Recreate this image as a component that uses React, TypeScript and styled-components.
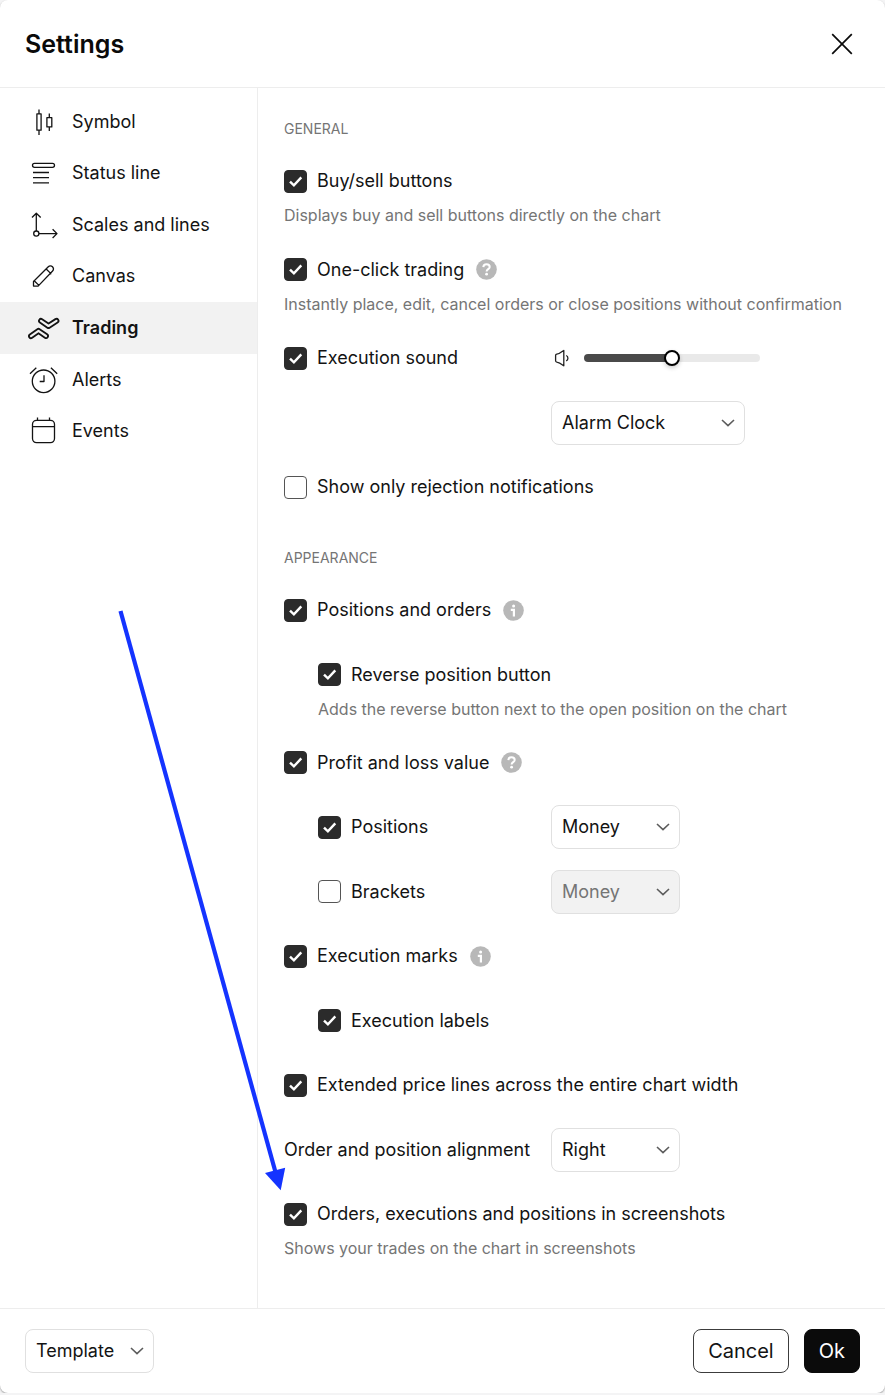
import React, { useId, useState } from "react";
import styled, { createGlobalStyle, css } from "styled-components";

const GlobalStyle = createGlobalStyle`
  *, *::before, *::after { box-sizing: border-box; }
  body {
    margin: 0;
    background: #f4f4f5;
    color: #131313;
    font-family: Inter, "Liberation Sans", sans-serif;
    font-size: 18px;
    line-height: 24px;
  }
  button, select, input { font: inherit; color: inherit; }
`;

const Dialog = styled.div`
  position: relative;
  display: flex;
  flex-direction: column;
  min-height: calc(100vh - 2px);
  background: #fff;
  border-radius: 8px;
  box-shadow: 0 1px 2px rgba(0, 0, 0, 0.35);
`;

const Header = styled.header`
  display: flex;
  align-items: center;
  justify-content: space-between;
  height: 88px;
  padding: 0 25px;
  border-bottom: 1px solid #ededed;
`;

const Title = styled.h1`
  margin: 0;
  font-size: 25px;
  line-height: 32px;
  font-weight: 600;
  color: #0a0a0a;
`;

const CloseButton = styled.button`
  display: grid;
  place-items: center;
  width: 36px;
  height: 36px;
  padding: 0;
  border: 0;
  background: none;
  cursor: pointer;
`;

const Body = styled.div`
  display: flex;
  flex: 1;
`;

const Sidebar = styled.nav`
  flex: none;
  width: 258px;
  padding-top: 8px;
  border-right: 1px solid #ededed;
`;

const NavList = styled.ul`
  display: grid;
  grid-auto-rows: 1fr;
  height: 361px;
  margin: 0;
  padding: 0;
  list-style: none;
`;

const NavItem = styled.li`
  display: flex;
`;

const NavLink = styled.a<{ $active?: boolean }>`
  display: flex;
  flex: 1;
  align-items: center;
  gap: 12px;
  padding: 0 28px;
  color: inherit;
  text-decoration: none;
  font-weight: ${(p) => (p.$active ? 600 : 400)};
  background: ${(p) => (p.$active ? "#f2f2f2" : "transparent")};
`;

const Panel = styled.main`
  display: flex;
  flex: 1;
  flex-direction: column;
  justify-content: space-between;
  gap: 20px;
  min-width: 0;
  padding: 31px 25px 48px 26px;
`;

const SectionTitle = styled.h2<{ $spaced?: boolean }>`
  margin: ${(p) => (p.$spaced ? "18px" : "0")} 0 0;
  font-size: 14px;
  line-height: 20px;
  font-weight: 400;
  text-transform: uppercase;
  color: #757575;
`;

const Setting = styled.div<{ $nested?: boolean }>`
  padding-left: ${(p) => (p.$nested ? "34px" : "0")};
`;

const Row = styled.div`
  display: flex;
  align-items: center;
  height: 44px;
`;

const Lead = styled.div<{ $nested?: boolean; $fixed?: boolean }>`
  display: flex;
  align-items: center;
  gap: 12px;
  white-space: nowrap;
  ${(p) =>
    p.$fixed &&
    css`
      flex: none;
      width: ${p.$nested ? "233px" : "267px"};
    `}
`;

const CheckLabel = styled.label`
  display: flex;
  align-items: center;
  gap: 10px;
  cursor: pointer;
`;

const CheckBox = styled.span`
  display: grid;
  flex: none;
  width: 23px;
  height: 23px;

  > * {
    grid-area: 1 / 1;
  }

  svg {
    pointer-events: none;
  }
`;

const CheckInput = styled.input`
  appearance: none;
  width: 23px;
  height: 23px;
  margin: 0;
  border: 1px solid #555;
  border-radius: 4px;
  background: #fff;

  &:checked {
    border-color: #2b2b2b;
    background: #2b2b2b;
  }
`;

const Hint = styled.p`
  margin: 0;
  font-size: 16px;
  color: #757575;
  white-space: nowrap;
`;

const SelectBox = styled.span<{ $wide?: boolean }>`
  display: inline-grid;
  align-items: center;
  flex: none;
  width: ${(p) => (p.$wide ? "194px" : "129px")};

  > * {
    grid-area: 1 / 1;
  }

  svg {
    justify-self: end;
    margin-right: 10px;
    pointer-events: none;
  }
`;

const SelectInput = styled.select`
  appearance: none;
  width: 100%;
  height: 44px;
  padding: 0 28px 0 10px;
  border: 1px solid #e0e0e0;
  border-radius: 8px;
  background: #fff;

  &:disabled {
    background: #f2f2f2;
    color: #757575;
    opacity: 1;
  }
`;

const Volume = styled.div`
  display: flex;
  align-items: center;
  gap: 12px;
  padding-left: 2px;
`;

const VolumeRange = styled.input`
  appearance: none;
  width: 176px;
  height: 16px;
  margin: 0;
  background: transparent;

  &::-webkit-slider-runnable-track {
    height: 8px;
    border-radius: 4px;
    background: linear-gradient(
      to right,
      #4a4a4a var(--level),
      #e9e9e9 var(--level)
    );
  }

  &::-webkit-slider-thumb {
    appearance: none;
    width: 16px;
    height: 16px;
    margin-top: -4px;
    border: 2px solid #000;
    border-radius: 50%;
    background: #fff;
    box-shadow: 0 2px 4px rgba(0, 0, 0, 0.2);
  }
`;

const Footer = styled.footer`
  display: flex;
  align-items: center;
  justify-content: space-between;
  padding: 20px 25px;
  border-top: 1px solid #ededed;
`;

const Actions = styled.div`
  display: flex;
  gap: 15px;
`;

const ActionButton = styled.button<{ $primary?: boolean }>`
  height: 44px;
  padding: 0 14px;
  border: 1px solid ${(p) => (p.$primary ? "#0b0b0b" : "#3c3c3c")};
  border-radius: 8px;
  background: ${(p) => (p.$primary ? "#0b0b0b" : "#fff")};
  color: ${(p) => (p.$primary ? "#fff" : "#131313")};
  font-size: 20px;
  cursor: pointer;
`;

const Pointer = styled.svg`
  position: absolute;
  top: 600px;
  left: 100px;
  pointer-events: none;
`;

const NavIcon = ({ children }: { children: React.ReactNode }) => (
  <svg
    width="32"
    height="32"
    viewBox="0 0 32 32"
    fill="none"
    stroke="currentColor"
    strokeWidth="1.3"
    strokeLinejoin="round"
    aria-hidden="true"
  >
    {children}
  </svg>
);

const Chevron = () => (
  <svg width="14" height="8" viewBox="0 0 14 8" fill="none" stroke="#5c5c5c" strokeWidth="1.6" aria-hidden="true">
    <path d="M1 1l6 5.6L13 1" />
  </svg>
);

const HelpIcon = () => (
  <svg width="21" height="21" viewBox="0 0 21 21" fill="none" role="img" aria-label="Help">
    <circle cx="10.5" cy="10.5" r="10.3" fill="#b8b8b8" />
    <path
      d="M7.3 8.1c.1-1.9 1.4-2.9 3.2-2.9s3.2 1 3.2 2.7c0 2.2-3.1 2.3-3.1 4.6"
      stroke="#fff"
      strokeWidth="2"
    />
    <circle cx="10.6" cy="15.2" r="1.4" fill="#fff" />
  </svg>
);

const InfoIcon = () => (
  <svg width="21" height="21" viewBox="0 0 21 21" fill="none" role="img" aria-label="Information">
    <circle cx="10.5" cy="10.5" r="10.3" fill="#b8b8b8" />
    <circle cx="10.6" cy="5.9" r="1.5" fill="#fff" />
    <path d="M7.8 9.9h3.1v6.6" stroke="#fff" strokeWidth="2.2" />
  </svg>
);

const SpeakerIcon = () => (
  <svg width="19" height="18" viewBox="0 0 19 18" fill="none" stroke="#222" strokeWidth="1.3" strokeLinejoin="round" aria-hidden="true">
    <path d="M2.600 6.400c0-.8.5-1.200 1.200-1.300 2.700-.3 4.500-1.800 7-3.700v15.400c-2.500-1.900-4.300-3.400-7-3.700-.7-.1-1.200-.5-1.200-1.300z" />
    <path d="M13.200 6.500c2.300 1 2.300 4.300 0 5.300" />
  </svg>
);

const navItems = [
  {
    name: "Symbol",
    icon: (
      <NavIcon>
        <path d="M8.900 7.800h4.200v16.400H8.900zM11 3.500v4.300M11 24.200v4.800M18.900 11.700h4.900v9.200h-4.900zM21.300 7.500v4.200M21.300 20.900v4.100" />
      </NavIcon>
    ),
  },
  {
    name: "Status line",
    icon: (
      <NavIcon>
        <rect x="4.500" y="6.300" width="22" height="4" rx="2" />
        <path d="M5 15.500h16M5 20.700h16M5 25.800h16" />
      </NavIcon>
    ),
  },
  {
    name: "Scales and lines",
    icon: (
      <NavIcon>
        <circle cx="8.300" cy="24.600" r="2.600" />
        <path d="M8.300 22V4.300M4 8.500l4.300-4.300 4.400 4.300M10.900 24.600h17.800M24.600 20.200l4.400 4.400-4.400 4.400" />
      </NavIcon>
    ),
  },
  {
    name: "Canvas",
    icon: (
      <NavIcon>
        <path d="M5.500 26.100v-4.600L20.300 6.700c1.300-1.300 3-1.100 4.200.1s1.400 2.900.1 4.200L10.100 26.100zM17.700 8.500l5.700 5.600M6.200 20.700l5 4.900" />
      </NavIcon>
    ),
  },
  {
    name: "Trading",
    active: true,
    icon: (
      <NavIcon>
        <g strokeLinecap="round">
          <path d="M13 8.800l7.500 5.200 8-5.200M3 24.200l7.500-5.400 7.500 5.200" strokeWidth="5.800" />
          <path d="M13 8.800l7.500 5.200 8-5.200M3 24.200l7.500-5.400 7.500 5.200" stroke="#f2f2f2" strokeWidth="2.200" />
        </g>
      </NavIcon>
    ),
  },
  {
    name: "Alerts",
    icon: (
      <NavIcon>
        <circle cx="15.600" cy="17.300" r="11.300" />
        <path d="M16 11.300v6.200h-4.300M2 9.800l6.300-6M22.900 3.800l6.300 6" />
      </NavIcon>
    ),
  },
  {
    name: "Events",
    icon: (
      <NavIcon>
        <rect x="4.500" y="5.300" width="22" height="22.300" rx="4" />
        <path d="M4.500 11.700h22M9.500 2.500v2.800M21.500 2.500v2.800" />
      </NavIcon>
    ),
  },
];

type SelectProps = { label: string; options: string[]; wide?: boolean; disabled?: boolean };

const Select = ({ label, options, wide, disabled }: SelectProps) => (
  <SelectBox $wide={wide}>
    <SelectInput aria-label={label} disabled={disabled}>
      {options.map((o) => (
        <option key={o}>{o}</option>
      ))}
    </SelectInput>
    <Chevron />
  </SelectBox>
);

type CheckSettingProps = {
  label: string;
  off?: boolean;
  nested?: boolean;
  hint?: string;
  icon?: React.ReactNode;
  control?: React.ReactNode;
};

const CheckSetting = ({ label, off, nested, hint, icon, control }: CheckSettingProps) => {
  const id = useId();
  const [checked, setChecked] = useState(!off);
  return (
    <Setting $nested={nested}>
      <Row>
        <Lead $nested={nested} $fixed={Boolean(control)}>
          <CheckLabel htmlFor={id}>
            <CheckBox>
              <CheckInput
                id={id}
                type="checkbox"
                checked={checked}
                onChange={(e) => setChecked(e.target.checked)}
              />
              {checked && (
                <svg width="23" height="23" viewBox="0 0 23 23" fill="none" stroke="#fff" strokeWidth="2.400" aria-hidden="true">
                  <path d="M6 11.600l3.900 3.800 7.400-8" />
                </svg>
              )}
            </CheckBox>
            {label}
          </CheckLabel>
          {icon}
        </Lead>
        {control}
      </Row>
      {hint && <Hint>{hint}</Hint>}
    </Setting>
  );
};

const VolumeControl = () => {
  const [level, setLevel] = useState(50);
  return (
    <Volume>
      <SpeakerIcon />
      <VolumeRange
        type="range"
        aria-label="Execution sound volume"
        value={level}
        onChange={(e) => setLevel(Number(e.target.value))}
        style={{ "--level": `${level}%` } as React.CSSProperties}
      />
    </Volume>
  );
};

export default function App() {
  const units = ["Money", "Ticks", "%"];
  return (
    <>
      <GlobalStyle />
      <Dialog role="dialog" aria-labelledby="settings-title">
        <Header>
          <Title id="settings-title">Settings</Title>
          <CloseButton type="button" aria-label="Close">
            <svg width="22" height="22" viewBox="0 0 22 22" stroke="#0a0a0a" strokeWidth="1.700" aria-hidden="true">
              <path d="M1.200 1.200l19.600 19.600M20.800 1.200L1.200 20.800" />
            </svg>
          </CloseButton>
        </Header>

        <Body>
          <Sidebar>
            <NavList>
              {navItems.map((item) => (
                <NavItem key={item.name}>
                  <NavLink href="#" $active={item.active} aria-current={item.active ? "page" : undefined}>
                    {item.icon}
                    {item.name}
                  </NavLink>
                </NavItem>
              ))}
            </NavList>
          </Sidebar>

          <Panel>
            <SectionTitle>General</SectionTitle>
            <CheckSetting label="Buy/sell buttons" hint="Displays buy and sell buttons directly on the chart" />
            <CheckSetting
              label="One-click trading"
              icon={<HelpIcon />}
              hint="Instantly place, edit, cancel orders or close positions without confirmation"
            />
            <CheckSetting label="Execution sound" control={<VolumeControl />} />
            <Row>
              <Lead $fixed />
              <Select wide label="Sound" options={["Alarm Clock", "Beep", "Chime"]} />
            </Row>
            <CheckSetting off label="Show only rejection notifications" />

            <SectionTitle $spaced>Appearance</SectionTitle>
            <CheckSetting label="Positions and orders" icon={<InfoIcon />} />
            <CheckSetting
              nested
              label="Reverse position button"
              hint="Adds the reverse button next to the open position on the chart"
            />
            <CheckSetting label="Profit and loss value" icon={<HelpIcon />} />
            <CheckSetting nested label="Positions" control={<Select label="Positions unit" options={units} />} />
            <CheckSetting
              off
              nested
              label="Brackets"
              control={<Select disabled label="Brackets unit" options={units} />}
            />
            <CheckSetting label="Execution marks" icon={<InfoIcon />} />
            <CheckSetting nested label="Execution labels" />
            <CheckSetting label="Extended price lines across the entire chart width" />
            <Row>
              <Lead $fixed>Order and position alignment</Lead>
              <Select label="Order and position alignment" options={["Right", "Center", "Left"]} />
            </Row>
            <CheckSetting
              label="Orders, executions and positions in screenshots"
              hint="Shows your trades on the chart in screenshots"
            />
          </Panel>
        </Body>

        <Footer>
          <Select label="Template" options={["Template"]} />
          <Actions>
            <ActionButton type="button">Cancel</ActionButton>
            <ActionButton type="button" $primary>
              Ok
            </ActionButton>
          </Actions>
        </Footer>

        <Pointer width="190" height="595" viewBox="0 0 190 595" aria-hidden="true">
          <path d="M20.500 11L176 574" stroke="#1433ff" strokeWidth="4.200" />
          <path d="M165 573l20.200-5.300-4.500 22.500z" fill="#1433ff" />
        </Pointer>
      </Dialog>
    </>
  );
}
